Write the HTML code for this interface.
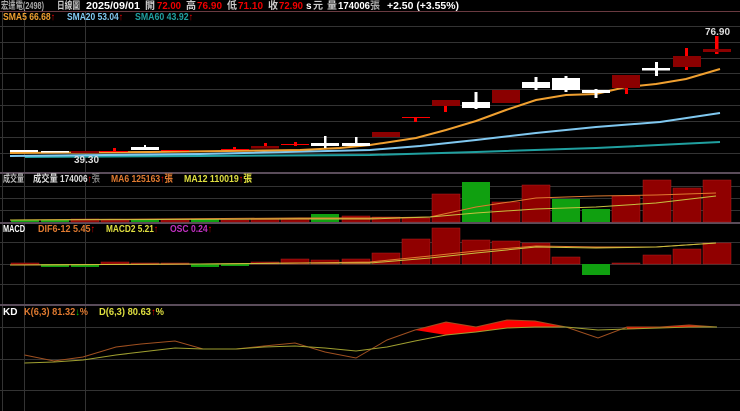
<!DOCTYPE html>
<html><head><meta charset="utf-8"><style>
html,body{margin:0;padding:0;background:#000;width:740px;height:411px;overflow:hidden}
svg{display:block}
text{font-family:"Liberation Sans","Noto Sans CJK TC",sans-serif;font-size:10px;font-weight:bold}
</style></head><body>
<svg width="740" height="411" viewBox="0 0 740 411" xmlns="http://www.w3.org/2000/svg">
<rect width="740" height="411" fill="#000"/>
<!-- header -->
<text x="1" y="9" fill="#aaa" font-weight="normal" font-size="9" textLength="43" lengthAdjust="spacingAndGlyphs">宏達電(2498)</text>
<text x="57" y="9" fill="#ccc" font-weight="normal" font-size="9" textLength="23" lengthAdjust="spacingAndGlyphs">日線圖</text>
<text x="86" y="9" fill="#fff" font-size="10" textLength="54" lengthAdjust="spacingAndGlyphs">2025/09/01</text>
<text x="145" y="9" fill="#ccc" font-weight="normal" font-size="9">開</text><text x="157" y="9" fill="#e00" textLength="24" lengthAdjust="spacingAndGlyphs">72.00</text>
<text x="186" y="9" fill="#ccc" font-weight="normal" font-size="9">高</text><text x="197" y="9" fill="#e00" textLength="25" lengthAdjust="spacingAndGlyphs">76.90</text>
<text x="227" y="9" fill="#ccc" font-weight="normal" font-size="9">低</text><text x="238" y="9" fill="#e00" textLength="25" lengthAdjust="spacingAndGlyphs">71.10</text>
<text x="268" y="9" fill="#ccc" font-weight="normal" font-size="9">收</text><text x="279" y="9" fill="#e00" textLength="24" lengthAdjust="spacingAndGlyphs">72.90</text>
<text x="306" y="9" fill="#fff">s</text><text x="313" y="9" fill="#ccc" font-weight="normal" font-size="9">元</text>
<text x="327" y="9" fill="#ccc" font-weight="normal" font-size="9">量</text><text x="338" y="9" fill="#fff" textLength="32" lengthAdjust="spacingAndGlyphs">174006</text>
<text x="370" y="9" fill="#aaa" font-weight="normal" font-size="9">張</text><text x="387" y="9" fill="#fff" textLength="72" lengthAdjust="spacingAndGlyphs">+2.50 (+3.55%)</text>
<line x1="0" y1="11.5" x2="740" y2="11.5" stroke="#6a3a40" stroke-width="1"/>
<!-- grid -->
<g stroke="#333" stroke-width="1">
<line x1="0" y1="26.5" x2="740" y2="26.5"/><line x1="0" y1="42.5" x2="740" y2="42.5"/><line x1="0" y1="58.5" x2="740" y2="58.5"/><line x1="0" y1="73.5" x2="740" y2="73.5"/><line x1="0" y1="89.5" x2="740" y2="89.5"/><line x1="0" y1="105.5" x2="740" y2="105.5"/><line x1="0" y1="121.5" x2="740" y2="121.5"/><line x1="0" y1="137.5" x2="740" y2="137.5"/><line x1="0" y1="153.5" x2="740" y2="153.5"/>
<line x1="0" y1="186.5" x2="740" y2="186.5"/><line x1="0" y1="198.5" x2="740" y2="198.5"/><line x1="0" y1="210.5" x2="740" y2="210.5"/>
<line x1="0" y1="242.5" x2="740" y2="242.5"/><line x1="0" y1="264.5" x2="740" y2="264.5"/><line x1="0" y1="284.5" x2="740" y2="284.5"/>
<line x1="0" y1="327.5" x2="740" y2="327.5"/><line x1="0" y1="359.5" x2="740" y2="359.5"/><line x1="0" y1="390.5" x2="740" y2="390.5"/>
<line x1="24.5" y1="12" x2="24.5" y2="411"/><line x1="85.5" y1="12" x2="85.5" y2="411"/>
<line x1="2.5" y1="12" x2="2.5" y2="411"/>
</g>
<g stroke="#5a4c5a" stroke-width="2">
<line x1="0" y1="173" x2="740" y2="173"/><line x1="0" y1="223" x2="740" y2="223"/><line x1="0" y1="305" x2="740" y2="305"/>
</g>
<!-- legends -->
<text x="3" y="20" fill="#f0a030" font-size="9.5" textLength="52" lengthAdjust="spacingAndGlyphs">SMA5 66.68<tspan fill="#e00">↑</tspan></text>
<text x="67" y="20" fill="#80c8f0" font-size="9.5" textLength="56" lengthAdjust="spacingAndGlyphs">SMA20 53.04<tspan fill="#e00">↑</tspan></text>
<text x="135" y="20" fill="#20a0a0" font-size="9.5" textLength="58" lengthAdjust="spacingAndGlyphs">SMA60 43.92<tspan fill="#e00">↑</tspan></text>
<text x="3" y="182" fill="#bbb" font-size="9" font-weight="normal" textLength="21" lengthAdjust="spacingAndGlyphs">成交量</text>
<text x="33" y="182" fill="#ddd" font-size="9.5" textLength="67" lengthAdjust="spacingAndGlyphs">成交量 174006<tspan fill="#e00">↑</tspan><tspan fill="#aaa" font-weight="normal">張</tspan></text>
<text x="111" y="182" fill="#e07a30" font-size="9.5" textLength="62" lengthAdjust="spacingAndGlyphs">MA6 125163<tspan fill="#e00">↑</tspan>張</text>
<text x="184" y="182" fill="#e0e040" font-size="9.5" textLength="68" lengthAdjust="spacingAndGlyphs">MA12 110019<tspan fill="#e00">↑</tspan>張</text>
<text x="3" y="232" fill="#fff" font-size="9.5" textLength="22" lengthAdjust="spacingAndGlyphs">MACD</text>
<text x="38" y="232" fill="#e07a30" font-size="9.5" textLength="57" lengthAdjust="spacingAndGlyphs">DIF6-12 5.45<tspan fill="#e00">↑</tspan></text>
<text x="106" y="232" fill="#e0e040" font-size="9.5" textLength="52" lengthAdjust="spacingAndGlyphs">MACD2 5.21<tspan fill="#e00">↑</tspan></text>
<text x="170" y="232" fill="#c030c0" font-size="9.5" textLength="42" lengthAdjust="spacingAndGlyphs">OSC 0.24<tspan fill="#e00">↑</tspan></text>
<text x="3" y="315" fill="#fff" font-size="9.5">KD</text>
<text x="24" y="315" fill="#e07a30" font-size="9.5" textLength="64" lengthAdjust="spacingAndGlyphs">K(6,3) 81.32<tspan fill="#0c0">↓</tspan>%</text>
<text x="99" y="315" fill="#e0e040" font-size="9.5" textLength="65" lengthAdjust="spacingAndGlyphs">D(6,3) 80.63<tspan fill="#e00">↑</tspan>%</text>
<!-- MAs main -->
<polyline fill="none" stroke="#20a0a0" stroke-width="2" points="25,157 200,156 370,155 476,152 596,148 720,142"/>
<polyline fill="none" stroke="#80c8f0" stroke-width="2" points="10,156 200,154 370,150 420,146 476,140 536,133 596,127 660,122 720,113"/>
<polyline fill="none" stroke="#f0a030" stroke-width="2" points="10,153 150,152 300,150 340,148 370,145 416,138 446,130 476,121 506,110 536,100 566,95 596,94 626,87 656,84 686,79 720,69"/>
<!-- candles -->
<g fill="#fff">
<rect x="10" y="150" width="28" height="2"/>
<rect x="41" y="151" width="28" height="1.5"/>
<rect x="131" y="147" width="28" height="3"/><rect x="144" y="145" width="2" height="5"/>
<rect x="311" y="143" width="28" height="3"/><rect x="324" y="136" width="2.5" height="12"/>
<rect x="342" y="143" width="28" height="3"/><rect x="355" y="137" width="2.5" height="9"/>
<rect x="462" y="102" width="28" height="6"/><rect x="474.5" y="92" width="3" height="17"/>
<rect x="522" y="82" width="28" height="6"/><rect x="534.5" y="77" width="3" height="13"/>
<rect x="552" y="78" width="28" height="12"/><rect x="564.5" y="76" width="3" height="16"/>
<rect x="582" y="90" width="28" height="3"/><rect x="594.5" y="89" width="3" height="9"/>
<rect x="642" y="68" width="28" height="2.5"/><rect x="655" y="62" width="3" height="14"/>
</g>
<g fill="#f00">
<rect x="113" y="148" width="3" height="4"/><rect x="233" y="147" width="3" height="3"/>
<rect x="264" y="143" width="3" height="3"/><rect x="294" y="142" width="3" height="4"/>
<rect x="414" y="117" width="3" height="5"/><rect x="444" y="105" width="3" height="7"/>
<rect x="625" y="87" width="3" height="7"/><rect x="685" y="48" width="3" height="22"/>
<rect x="715" y="36" width="3.5" height="18"/>
<rect x="100" y="151" width="28" height="1"/><rect x="161" y="150" width="28" height="1"/><rect x="221" y="149" width="28" height="1"/><rect x="281" y="144" width="28" height="1"/><rect x="402" y="117" width="28" height="1"/>
</g>
<g fill="#8b0000">
<rect x="71" y="151" width="28" height="2"/>
<rect x="251" y="146" width="28" height="2.5"/>
<rect x="372" y="132" width="28" height="5"/>
<rect x="432" y="100" width="28" height="6"/>
<rect x="492" y="90" width="28" height="13"/>
<rect x="612" y="75" width="28" height="13"/>
<rect x="673" y="56" width="28" height="11"/>
<rect x="703" y="49" width="28" height="3"/>
</g>
<text x="705" y="35" fill="#ddd" font-size="9" font-weight="normal">76.90</text>
<text x="74" y="163" fill="#ddd" font-size="9" font-weight="normal">39.30</text>
<!-- volume -->
<g fill="#900000" stroke="#b02020" stroke-width="0.5">
<rect x="71" y="219" width="28" height="3"/><rect x="101" y="220" width="28" height="2"/><rect x="161" y="220" width="28" height="2"/><rect x="221" y="220" width="28" height="2"/><rect x="251" y="219" width="28" height="3"/><rect x="281" y="219" width="28" height="3"/><rect x="342" y="216" width="28" height="6"/>
<rect x="372" y="217" width="28" height="5"/><rect x="402" y="218" width="28" height="4"/><rect x="432" y="194" width="28" height="28"/><rect x="492" y="202" width="28" height="20"/><rect x="522" y="185" width="28" height="37"/><rect x="612" y="196" width="28" height="26"/><rect x="643" y="180" width="28" height="42"/><rect x="673" y="188" width="28" height="34"/><rect x="703" y="180" width="28" height="42"/>
</g>
<g fill="#10a010">
<rect x="11" y="220" width="28" height="2"/><rect x="41" y="220" width="28" height="2"/><rect x="131" y="220" width="28" height="2"/><rect x="191" y="219" width="28" height="3"/><rect x="311" y="214" width="28" height="8"/>
<rect x="462" y="182" width="28" height="40"/><rect x="552" y="199" width="28" height="23"/><rect x="582" y="209" width="28" height="13"/>
</g>
<polyline fill="none" stroke="#e07a30" stroke-width="1" points="10,220 300,218 370,218 430,217 476,207 536,198 596,196 656,195 716,193"/>
<polyline fill="none" stroke="#c8c040" stroke-width="1" points="10,220 300,219 370,219 430,217 476,213 536,209 596,207 656,203 716,196"/>
<!-- MACD -->
<g fill="#900000" stroke="#b02020" stroke-width="0.5">
<rect x="11" y="263" width="28" height="1.5"/><rect x="101" y="262" width="28" height="2"/><rect x="131" y="263" width="28" height="1.5"/><rect x="161" y="263" width="28" height="1.5"/><rect x="251" y="262" width="28" height="2"/><rect x="281" y="259" width="28" height="5"/><rect x="311" y="260" width="28" height="4"/><rect x="342" y="259" width="28" height="5"/>
<rect x="372" y="253" width="28" height="11"/><rect x="402" y="239" width="28" height="25"/><rect x="432" y="228" width="28" height="36"/><rect x="462" y="240" width="28" height="24"/><rect x="492" y="241" width="28" height="23"/><rect x="522" y="243" width="28" height="21"/><rect x="552" y="257" width="28" height="7"/><rect x="612" y="263" width="28" height="1"/><rect x="643" y="255" width="28" height="9"/><rect x="673" y="249" width="28" height="15"/><rect x="703" y="243" width="28" height="21"/>
</g>
<g fill="#10a010">
<rect x="41" y="264" width="28" height="3"/><rect x="71" y="264" width="28" height="3"/><rect x="191" y="264" width="28" height="3"/><rect x="221" y="264" width="28" height="2"/><rect x="582" y="264" width="28" height="11"/>
</g>
<polyline fill="none" stroke="#e07a30" stroke-width="1" points="10,265 200,264 300,263 370,262 430,256 476,251 536,246 596,247 656,247 716,243"/>
<polyline fill="none" stroke="#c8c040" stroke-width="1" points="10,265 200,264 300,263 370,263 430,258 476,253 536,247 596,248 656,247 716,243"/>
<!-- KD -->
<polygon fill="#f00" points="415,330 446,322 476,327 507,320 535,321 566,327 535,327 507,328 476,332 446,335"/>
<polygon fill="#f00" points="627,327 660,327 689,325 717,327 689,327 660,328 627,329"/>
<polyline fill="none" stroke="#a05020" stroke-width="1" points="24.5,355 54,361 83,357 116,347 141,344 175,341 203,349 236,349 264,346 295,343 325,352 356,358 387,340 415,330 446,322 476,327 507,320 535,321 566,327 598,338 627,327 660,327 689,325 717,327"/>
<polyline fill="none" stroke="#a0a030" stroke-width="1" points="24.5,363 54,362 83,360 116,355 141,352 175,348 203,349 236,349 264,347 295,346 325,348 356,351 387,347 415,341 446,335 476,332 507,328 535,327 566,327 598,330 627,329 660,328 689,327 717,327"/>
</svg>
</body></html>
